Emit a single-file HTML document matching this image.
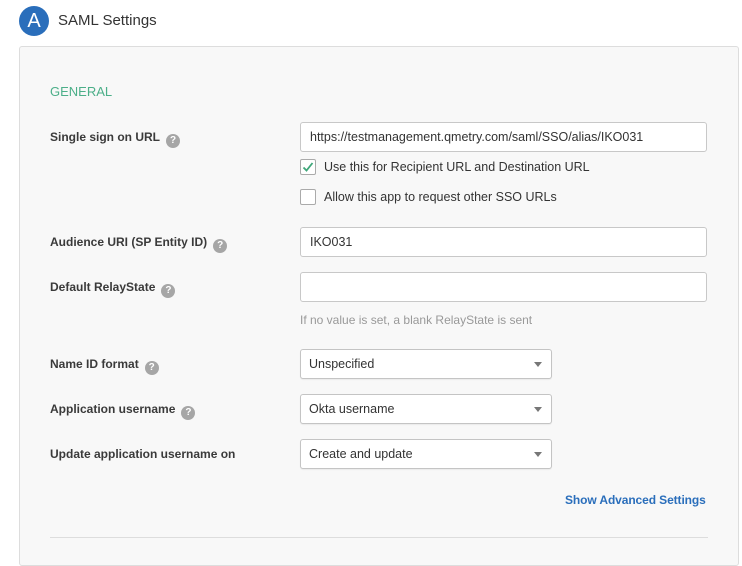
<!DOCTYPE html>
<html><head><style>
*{box-sizing:border-box;margin:0;padding:0}
body{width:742px;height:551px;background:#fff;font-family:"Liberation Sans",sans-serif;position:relative;overflow:hidden;color:#333}
.a{position:absolute}
.lbl{position:absolute;left:50px;font-size:12px;font-weight:bold;color:#3a3a3a}
.q{display:inline-block;width:14px;height:14px;border-radius:50%;background:#a6a6a6;color:#fff;font-size:10px;text-align:center;line-height:14px;margin-left:6px;vertical-align:-2px}
.inp{position:absolute;left:300px;width:407px;height:30px;border:1px solid #c8c8c8;border-radius:3px;background:#fff;font-size:12.5px;padding-left:9px;line-height:28px;color:#333}
.sel{position:absolute;left:300px;width:252px;height:30px;border:1px solid #c4c4c4;border-radius:3px;background:#fff;font-size:12.5px;padding-left:8px;line-height:28px;color:#333;box-shadow:0 1px 1px rgba(0,0,0,.06)}
.sel:after{content:"";position:absolute;right:9px;top:12px;border-left:4px solid transparent;border-right:4px solid transparent;border-top:5px solid #777}
.cb{position:absolute;left:300px;width:16px;height:16px;border:1px solid #aaa;border-radius:2px;background:#fff}
.ct{position:absolute;left:324px;font-size:12.5px;color:#333}
</style></head><body>
<div class="a" style="left:19px;top:6px;width:30px;height:30px;border-radius:50%;background:#2a6ebb;color:#fff;font-size:20px;text-align:center;line-height:30px">A</div>
<div class="a" style="left:58px;top:12px;font-size:15px;color:#333">SAML Settings</div>
<div class="a" style="left:19px;top:46px;width:720px;height:520px;background:#f8f8f8;border:1px solid #ddd;border-radius:3px"></div>
<div class="a" style="left:50px;top:84px;font-size:13px;color:#4caf89">GENERAL</div>
<div class="lbl" style="top:130px">Single sign on URL<span class="q">?</span></div>
<div class="inp" style="top:122px">https://testmanagement.qmetry.com/saml/SSO/alias/IKO031</div>
<div class="cb" style="top:159px"><svg width="14" height="14" viewBox="0 0 14 14" style="position:absolute;left:0;top:0"><path d="M2.5 7.5l3 3 6-7.5" stroke="#3fa77a" stroke-width="1.8" fill="none"/></svg></div>
<div class="ct" style="top:160px">Use this for Recipient URL and Destination URL</div>
<div class="cb" style="top:189px"></div>
<div class="ct" style="top:190px">Allow this app to request other SSO URLs</div>
<div class="lbl" style="top:235px">Audience URI (SP Entity ID)<span class="q">?</span></div>
<div class="inp" style="top:227px">IKO031</div>
<div class="lbl" style="top:280px">Default RelayState<span class="q">?</span></div>
<div class="inp" style="top:272px"></div>
<div class="a" style="left:300px;top:313px;font-size:12px;color:#999">If no value is set, a blank RelayState is sent</div>
<div class="lbl" style="top:357px">Name ID format<span class="q">?</span></div>
<div class="sel" style="top:349px">Unspecified</div>
<div class="lbl" style="top:402px">Application username<span class="q">?</span></div>
<div class="sel" style="top:394px">Okta username</div>
<div class="lbl" style="top:447px">Update application username on</div>
<div class="sel" style="top:439px">Create and update</div>
<div class="a" style="left:565px;top:493px;font-size:12px;font-weight:bold;color:#2a6ebb;letter-spacing:-0.1px">Show Advanced Settings</div>
<div class="a" style="left:50px;top:537px;width:658px;height:1px;background:#ddd"></div>
</body></html>
